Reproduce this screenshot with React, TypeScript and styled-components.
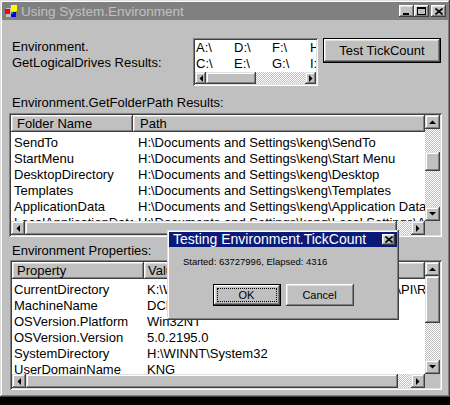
import React from 'react';
import styled, { createGlobalStyle } from 'styled-components';

const Global = createGlobalStyle`
  html, body { margin: 0; padding: 0; background: #000; }
  body { font-family: "Liberation Sans", Arial, sans-serif; }
  #root { width: 450px; height: 405px; overflow: hidden; }
`;

const raised = `box-shadow: inset -1px -1px #404040, inset 1px 1px #dfdfdf, inset -2px -2px #808080, inset 2px 2px #fff;`;
const buttonBevel = `box-shadow: inset -1px -1px #404040, inset 1px 1px #fff, inset -2px -2px #808080, inset 2px 2px #dfdfdf;`;
const sunken = `box-shadow: inset 1px 1px #808080, inset -1px -1px #fff, inset 2px 2px #404040, inset -2px -2px #dfdfdf;`;

const Window = styled.div`
  position: relative;
  width: 450px;
  height: 397px;
  box-sizing: border-box;
  padding: 2px;
  background: #c0c0c0;
  ${raised}
  font-size: 13px;
  color: #000;
  display: flex;
  flex-direction: column;
`;

const TitleBar = styled.div`
  height: 18px;
  flex: none;
  display: flex;
  align-items: center;
  padding-left: 3px;
  padding-right: 2px;
  background: #808080;
  color: #c0c0c0;
  font-size: 13.5px;
  line-height: 18px;
  white-space: nowrap;
`;

const TitleText = styled.span`
  margin-left: 3px;
  padding-top: 1px;
`;

const TitleButtons = styled.div`
  margin-left: auto;
  display: flex;
  align-items: center;
`;

const CaptionButton = styled.div<{ $gap?: number }>`
  width: 15px;
  height: 12px;
  margin-left: ${(p) => p.$gap ?? 0}px;
  background: #c0c0c0;
  ${buttonBevel}
  display: flex;
  align-items: center;
  justify-content: center;
`;

const TopRow = styled.div`
  margin-top: 18px;
  display: flex;
  align-items: flex-start;
`;

const Label = styled.div<{ $mt?: number; $w?: number }>`
  margin-left: 10px;
  margin-top: ${(p) => p.$mt ?? 0}px;
  width: ${(p) => (p.$w ? `${p.$w}px` : 'auto')};
  line-height: 16px;
  white-space: nowrap;
  flex: none;
`;

const DrivesBox = styled.div`
  width: 125px;
  height: 48px;
  box-sizing: border-box;
  padding: 2px;
  background: #fff;
  ${sunken}
  display: flex;
  flex-direction: column;
  flex: none;
`;

const DriveGrid = styled.div`
  height: 32px;
  display: grid;
  grid-auto-flow: column;
  grid-template-rows: repeat(2, 16px);
  grid-auto-columns: 38px;
  overflow: hidden;
  padding-left: 1px;
`;

const DriveItem = styled.div`
  line-height: 16px;
  white-space: nowrap;
`;

const PushButton = styled.div<{ $default?: boolean; $w: number; $h: number; $size?: number }>`
  width: ${(p) => p.$w}px;
  height: ${(p) => p.$h}px;
  box-sizing: border-box;
  flex: none;
  position: relative;
  background: #c0c0c0;
  border: ${(p) => (p.$default ? '1px solid #000' : 'none')};
  ${buttonBevel}
  display: flex;
  align-items: center;
  justify-content: center;
  font-size: ${(p) => p.$size ?? 13}px;
`;

const TickButton = styled(PushButton)`
  margin-left: 5px;
`;

const FocusRing = styled.div`
  position: absolute;
  inset: 3px;
  border: 1px dotted #000;
`;

const ListFrame = styled.div<{ $ml: number; $mt: number; $w: number; $h: number }>`
  margin-left: ${(p) => p.$ml}px;
  margin-top: ${(p) => p.$mt}px;
  width: ${(p) => p.$w}px;
  height: ${(p) => p.$h}px;
  box-sizing: border-box;
  padding: 2px;
  background: #fff;
  ${sunken}
  display: grid;
  grid-template-columns: 1fr 15px;
  grid-template-rows: 1fr 14px;
  flex: none;
`;

const ListContent = styled.div`
  overflow: hidden;
  background: #fff;
  min-width: 0;
`;

const Header = styled.div`
  display: flex;
  height: 17px;
  background: #c0c0c0;
`;

const HeaderCell = styled.div<{ $w?: number; $pl: number }>`
  ${(p) => (p.$w ? `width: ${p.$w}px;` : 'flex: 1;')}
  flex-shrink: 0;
  box-sizing: border-box;
  height: 17px;
  line-height: 17px;
  padding-left: ${(p) => p.$pl}px;
  background: #c0c0c0;
  ${buttonBevel}
  white-space: nowrap;
  overflow: hidden;
`;

const Rows = styled.div`
  padding-top: 3px;
`;

const Row = styled.div`
  display: flex;
  height: 16px;
  line-height: 16px;
  white-space: nowrap;
`;

const Cell = styled.div<{ $w?: number; $pl: number }>`
  ${(p) => (p.$w ? `width: ${p.$w}px;` : 'flex: 1;')}
  flex-shrink: 0;
  box-sizing: border-box;
  padding-left: ${(p) => p.$pl}px;
  overflow: hidden;
  white-space: nowrap;
`;

const Corner = styled.div`
  background: #c0c0c0;
`;

const ScrollBar = styled.div<{ $vertical?: boolean }>`
  display: flex;
  flex-direction: ${(p) => (p.$vertical ? 'column' : 'row')};
  min-width: 0;
  min-height: 0;
`;

const ArrowButton = styled.div<{ $w: number; $h: number }>`
  width: ${(p) => p.$w}px;
  height: ${(p) => p.$h}px;
  flex: none;
  background: #c0c0c0;
  ${raised}
  display: flex;
  align-items: center;
  justify-content: center;
`;

const Track = styled.div<{ $vertical?: boolean }>`
  flex: 1;
  display: flex;
  flex-direction: ${(p) => (p.$vertical ? 'column' : 'row')};
  background-color: #fff;
  background-image: repeating-conic-gradient(#c0c0c0 0 25%, #fff 0 50%);
  background-size: 2px 2px;
  min-width: 0;
  min-height: 0;
`;

const Thumb = styled.div<{ $vertical?: boolean; $offset: number; $size: number }>`
  flex: none;
  ${(p) =>
    p.$vertical
      ? `margin-top: ${p.$offset}px; height: ${p.$size}px; width: 100%;`
      : `margin-left: ${p.$offset}px; width: ${p.$size}px; height: 100%;`}
  background: #c0c0c0;
  ${raised}
`;

const Dialog = styled.div`
  position: absolute;
  left: 167px;
  top: 230px;
  width: 232px;
  height: 90px;
  box-sizing: border-box;
  padding: 2px;
  background: #c0c0c0;
  ${raised}
  display: flex;
  flex-direction: column;
`;

const DialogTitle = styled.div`
  height: 15px;
  flex: none;
  display: flex;
  align-items: center;
  padding-left: 4px;
  padding-right: 2px;
  background: #0a1a78;
  color: #fff;
  font-size: 14px;
  line-height: 15px;
  white-space: nowrap;
`;

const DialogClose = styled.div`
  margin-left: auto;
  width: 13px;
  height: 11px;
  background: #c0c0c0;
  ${buttonBevel}
  display: flex;
  align-items: center;
  justify-content: center;
`;

const DialogMessage = styled.div`
  margin-top: 9px;
  margin-left: 14px;
  font-size: 9.5px;
  line-height: 12px;
  white-space: nowrap;
`;

const DialogButtons = styled.div`
  margin-top: 16px;
  display: flex;
  justify-content: center;
  gap: 5px;
`;

type ArrowDir = 'up' | 'down' | 'left' | 'right';

const Arrow = ({ dir }: { dir: ArrowDir }) => {
  const pts: Record<ArrowDir, string> = {
    up: '0,4 7,4 3.5,0.5',
    down: '0,0 7,0 3.5,3.5',
    left: '4,0 4,7 0.5,3.5',
    right: '0,0 0,7 3.5,3.5',
  };
  const vertical = dir === 'up' || dir === 'down';
  return (
    <svg width={vertical ? 7 : 4} height={vertical ? 4 : 7} viewBox={vertical ? '0 0 7 4' : '0 0 4 7'}>
      <polygon points={pts[dir]} fill="#000" />
    </svg>
  );
};

const VScroll = ({ offset, size }: { offset: number; size: number }) => (
  <ScrollBar $vertical>
    <ArrowButton $w={15} $h={14}>
      <Arrow dir="up" />
    </ArrowButton>
    <Track $vertical>
      <Thumb $vertical $offset={offset} $size={size} />
    </Track>
    <ArrowButton $w={15} $h={14}>
      <Arrow dir="down" />
    </ArrowButton>
  </ScrollBar>
);

const HScroll = ({ offset, size, w = 14, h = 14 }: { offset: number; size: number; w?: number; h?: number }) => (
  <ScrollBar>
    <ArrowButton $w={w} $h={h}>
      <Arrow dir="left" />
    </ArrowButton>
    <Track>
      <Thumb $offset={offset} $size={size} />
    </Track>
    <ArrowButton $w={w} $h={h}>
      <Arrow dir="right" />
    </ArrowButton>
  </ScrollBar>
);

const AppIcon = () => (
  <svg width="13" height="13" viewBox="0 0 13 13">
    <rect x="0.5" y="2.5" width="11" height="10" fill="#c0c0c0" stroke="#808080" />
    <rect x="6" y="0" width="6" height="6" fill="#ffff00" />
    <rect x="0" y="4" width="5" height="5" fill="#ff0000" />
    <rect x="6" y="7" width="5" height="5" fill="#0000ff" />
    <rect x="6" y="7" width="2" height="2" fill="#00c000" />
  </svg>
);

const MinGlyph = () => (
  <svg width="7" height="7" viewBox="0 0 7 7">
    <rect x="0" y="5" width="6" height="2" fill="#000" />
  </svg>
);
const MaxGlyph = () => (
  <svg width="9" height="8" viewBox="0 0 9 8">
    <rect x="0.5" y="0.5" width="8" height="7" fill="none" stroke="#000" />
    <rect x="0" y="0" width="9" height="2" fill="#000" />
  </svg>
);
const CloseGlyph = ({ s = 8 }: { s?: number }) => (
  <svg width={s} height={s - 1} viewBox="0 0 8 7">
    <path d="M0.5 0.5 L7.5 6.5 M7.5 0.5 L0.5 6.5" stroke="#000" strokeWidth="1.6" />
  </svg>
);

const drives = ['A:\\', 'C:\\', 'D:\\', 'E:\\', 'F:\\', 'G:\\', 'H:\\', 'I:\\', 'J:\\', 'K:\\'];

const folders: [string, string][] = [
  ['SendTo', 'H:\\Documents and Settings\\keng\\SendTo'],
  ['StartMenu', 'H:\\Documents and Settings\\keng\\Start Menu'],
  ['DesktopDirectory', 'H:\\Documents and Settings\\keng\\Desktop'],
  ['Templates', 'H:\\Documents and Settings\\keng\\Templates'],
  ['ApplicationData', 'H:\\Documents and Settings\\keng\\Application Data'],
  ['LocalApplicationData', 'H:\\Documents and Settings\\keng\\Local Settings\\Application Data'],
];

const props: [string, string][] = [
  ['CurrentDirectory', 'K:\\Work\\Book\\CSharp\\Samples\\Chapter 4\\API\\Release'],
  ['MachineName', 'DCLAPTOP'],
  ['OSVersion.Platform', 'Win32NT'],
  ['OSVersion.Version', '5.0.2195.0'],
  ['SystemDirectory', 'H:\\WINNT\\System32'],
  ['UserDomainName', 'KNG'],
  ['UserName', 'keng'],
];

export default function App() {
  return (
    <>
      <Global />
      <Window>
        <TitleBar>
          <AppIcon />
          <TitleText>Using System.Environment</TitleText>
          <TitleButtons>
            <CaptionButton>
              <MinGlyph />
            </CaptionButton>
            <CaptionButton>
              <MaxGlyph />
            </CaptionButton>
            <CaptionButton $gap={2}>
              <CloseGlyph />
            </CaptionButton>
          </TitleButtons>
        </TitleBar>

        <TopRow>
          <Label $mt={1} $w={181}>
            Environment.
            <br />
            GetLogicalDrives Results:
          </Label>
          <DrivesBox>
            <DriveGrid>
              {drives.map((d) => (
                <DriveItem key={d}>{d}</DriveItem>
              ))}
            </DriveGrid>
            <HScroll offset={0} size={50} w={11} h={12} />
          </DrivesBox>
          <TickButton $default $w={118} $h={25}>
            Test TickCount
          </TickButton>
        </TopRow>

        <Label $mt={9}>Environment.GetFolderPath Results:</Label>
        <ListFrame $ml={7} $mt={2} $w={433} $h={124}>
          <ListContent>
            <Header>
              <HeaderCell $w={122} $pl={6}>
                Folder Name
              </HeaderCell>
              <HeaderCell $pl={7}>Path</HeaderCell>
            </Header>
            <Rows>
              {folders.map(([a, b]) => (
                <Row key={a}>
                  <Cell $w={122} $pl={3}>
                    {a}
                  </Cell>
                  <Cell $pl={5}>{b}</Cell>
                </Row>
              ))}
            </Rows>
          </ListContent>
          <VScroll offset={23} size={19} />
          <HScroll offset={0} size={372} />
          <Corner />
        </ListFrame>

        <Label $mt={6}>Environment Properties:</Label>
        <ListFrame $ml={8} $mt={1} $w={432} $h={130}>
          <ListContent>
            <Header>
              <HeaderCell $w={132} $pl={5}>
                Property
              </HeaderCell>
              <HeaderCell $pl={4}>Value</HeaderCell>
            </Header>
            <Rows>
              {props.map(([a, b]) => (
                <Row key={a}>
                  <Cell $w={132} $pl={2}>
                    {a}
                  </Cell>
                  <Cell $pl={3}>{b}</Cell>
                </Row>
              ))}
            </Rows>
          </ListContent>
          <VScroll offset={0} size={47} />
          <HScroll offset={0} size={372} />
          <Corner />
        </ListFrame>

        <Dialog>
          <DialogTitle>
            Testing Environment.TickCount
            <DialogClose>
              <CloseGlyph s={8} />
            </DialogClose>
          </DialogTitle>
          <DialogMessage>Started: 63727996, Elapsed: 4316</DialogMessage>
          <DialogButtons>
            <PushButton $default $w={68} $h={22} $size={11}>
              OK
              <FocusRing />
            </PushButton>
            <PushButton $w={68} $h={22} $size={11}>
              Cancel
            </PushButton>
          </DialogButtons>
        </Dialog>
      </Window>
    </>
  );
}
